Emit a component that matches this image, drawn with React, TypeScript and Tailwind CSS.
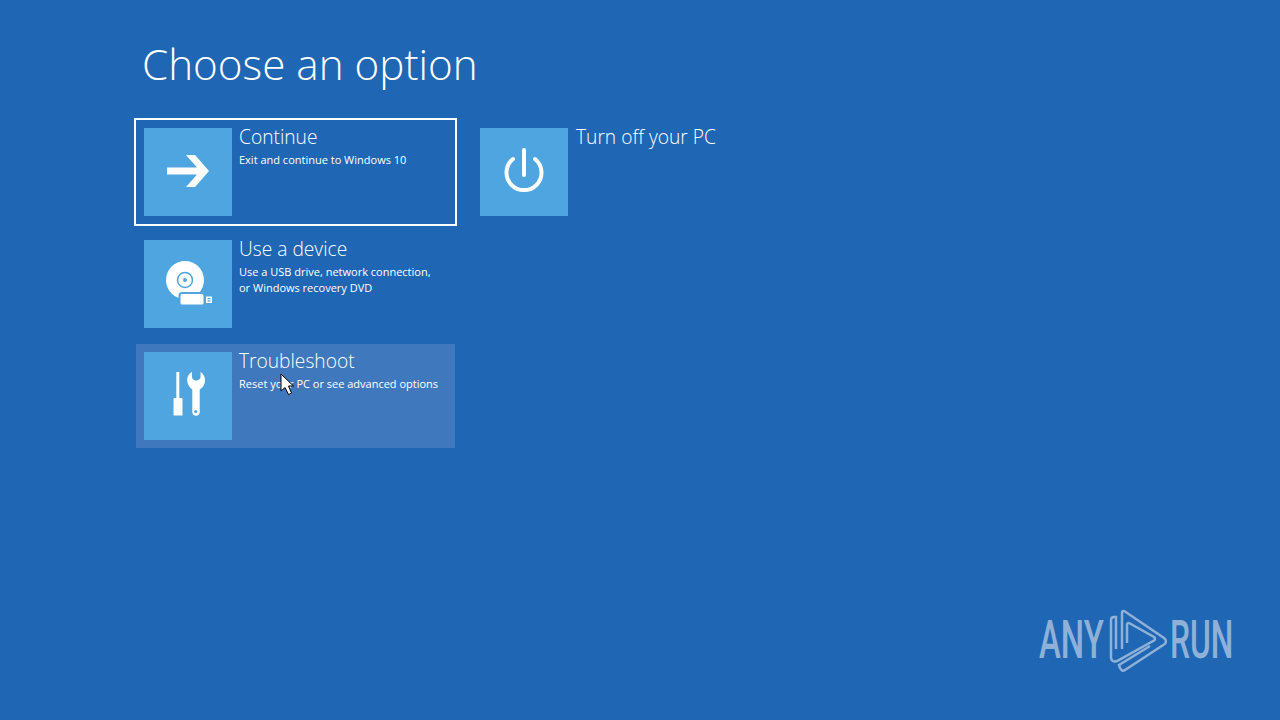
import React from "react";

const ArrowIcon = () => (
  <svg width="88" height="88" viewBox="0 0 88 88" fill="white">
    <path d="M42 27H51L65 43L51 59H42L53 46.500H23V39.500H53Z" />
  </svg>
);

const PowerIcon = () => (
  <svg width="88" height="88" viewBox="0 0 88 88" fill="none" stroke="white" strokeWidth="4" strokeLinecap="round">
    <path d="M44 22V47" />
    <path d="M33 31A17.500 17.500 0 1 0 55 31" />
  </svg>
);

const DeviceIcon = () => (
  <svg width="88" height="88" viewBox="0 0 88 88">
    <circle cx="41" cy="40" r="19" fill="white" />
    <circle cx="41" cy="40" r="7.500" fill="none" stroke="#4fa5df" strokeWidth="1.500" />
    <circle cx="41" cy="40" r="2" fill="#4fa5df" />
    <rect x="35.500" y="53" width="25" height="12.500" rx="2.500" fill="white" stroke="#4fa5df" strokeWidth="2" />
    <rect x="62" y="56.500" width="6" height="6.500" fill="white" />
    <rect x="63.500" y="58" width="3" height="1.200" fill="#4fa5df" />
    <rect x="63.500" y="60.300" width="3" height="1.200" fill="#4fa5df" />
  </svg>
);

const ToolsIcon = () => (
  <svg width="88" height="88" viewBox="0 0 88 88" fill="white">
    <rect x="32.300" y="20" width="3" height="27" />
    <path d="M29.500 47a1 1 0 0 1 1-1h7a1 1 0 0 1 1 1V63.500h-9z" />
    <path
      fillRule="evenodd"
      d="M48 20C44 22 43 26 43.300 29C43.600 33 46 36 48.300 37.500V60A3.700 3.700 0 0 0 55.700 60V37.500C58.500 36 60.700 33 61 29C61.300 26 60 22 56.500 20V25C56.500 27 54 28.500 52 28.500C50 28.500 48 27 48 25Z"
    />
    <circle cx="51.700" cy="59.500" r="1.500" fill="#4fa5df" />
  </svg>
);

const Cursor = () => (
  <svg className="absolute left-[280px] top-[373px]" width="15" height="23" viewBox="0 0 15 23">
    <path d="M1 1V18L5 14.500L8.500 21.500L11.500 20L8.500 13H13.500Z" fill="white" stroke="black" strokeWidth="1" />
  </svg>
);

const Watermark = () => (
  <div className="absolute left-[1039px] top-[605px] flex h-[70px] items-center text-[#8fb1d8]">
    <span className="w-[66px] origin-left scale-x-[0.62] text-[53px] leading-none font-[Roboto,sans-serif] font-medium whitespace-nowrap">
      ANY
    </span>
    <svg width="70" height="70" viewBox="0 0 70 70" fill="none" stroke="currentColor" strokeWidth="2.500">
      <path d="M17 44V8Q17 5 20 6.500L59 33Q63 36.500 59 39.500L20 65Q17 67 15 63L14 60L45 41" />
      <path d="M22 38V20Q22 17 25 18.500L49 32Q51 34 49 35.500L12 56Q7 58 6 53V15Q6 12 9 12H11V44" />
    </svg>
    <span className="ml-[-5px] w-[62px] origin-left scale-x-[0.6] text-[53px] leading-none font-[Roboto,sans-serif] font-medium whitespace-nowrap">
      RUN
    </span>
  </div>
);

type OptionProps = {
  icon: React.ReactNode;
  title: string;
  lines?: string[];
  className?: string;
};

const Option = ({ icon, title, lines = [], className = "" }: OptionProps) => (
  <div className={`flex h-[104px] w-[319px] gap-[7px] p-2 ${className}`}>
    <div className="h-[88px] w-[88px] shrink-0 bg-[#4fa5df]">{icon}</div>
    <div className="whitespace-nowrap">
      <div className="mt-[-5px] text-[19.200px] leading-[27px] font-light text-white">{title}</div>
      <div className="mt-[2px] text-[11px] leading-[16px] text-white">
        {lines.map((line) => (
          <div key={line}>{line}</div>
        ))}
      </div>
    </div>
  </div>
);

export default function App() {
  return (
    <div className="relative h-[720px] w-[1280px] overflow-hidden bg-[#1f67b4] font-['Open_Sans',sans-serif]">
      <div className="pl-[136px]">
        <h1 className="pt-[35px] pl-[6px] text-[42.200px] leading-[58px] font-light text-white">Choose an option</h1>
        <div className="mt-[27px] flex gap-[17px]">
          <div className="flex flex-col gap-2">
            <Option
              icon={<ArrowIcon />}
              title="Continue"
              lines={["Exit and continue to Windows 10"]}
              className="outline-2 outline-white"
            />
            <Option
              icon={<DeviceIcon />}
              title="Use a device"
              lines={["Use a USB drive, network connection,", "or Windows recovery DVD"]}
            />
            <Option
              icon={<ToolsIcon />}
              title="Troubleshoot"
              lines={["Reset your PC or see advanced options"]}
              className="bg-[#3f78bc]"
            />
          </div>
          <Option icon={<PowerIcon />} title="Turn off your PC" className="gap-[8px]" />
        </div>
      </div>
      <Cursor />
      <Watermark />
    </div>
  );
}
